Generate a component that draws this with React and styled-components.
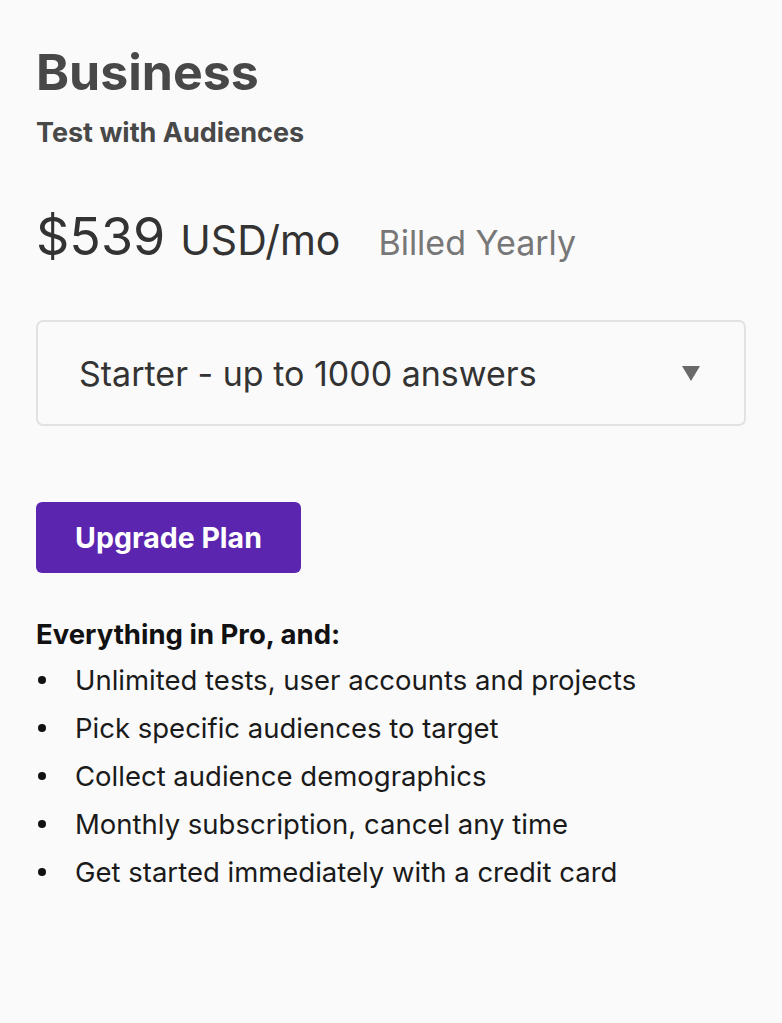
import styled, { createGlobalStyle } from 'styled-components';

const Global = createGlobalStyle`
  html, body {
    margin: 0;
    padding: 0;
    background: #fafafa;
  }
  body {
    font-family: Inter, Lato, "Liberation Sans", sans-serif;
    -webkit-font-smoothing: antialiased;
  }
`;

const Card = styled.div`
  width: 782px;
  min-height: 1023px;
  box-sizing: border-box;
  padding: 40px 36px 0 36px;
  background: #fafafa;
`;

const Title = styled.h1`
  margin: 0;
  font-size: 50px;
  line-height: 64px;
  font-weight: 700;
  color: #484848;
`;

const Subtitle = styled.div`
  margin-top: 13px;
  font-size: 27px;
  line-height: 32px;
  font-weight: 700;
  color: #484848;
`;

const PriceRow = styled.div`
  display: flex;
  align-items: baseline;
  margin-top: 56px;
  color: #333;
`;

const Amount = styled.span`
  font-size: 52px;
  font-weight: 400;
`;

const Unit = styled.span`
  margin-left: 15px;
  font-size: 41px;
`;

const Billing = styled.span`
  margin-left: 38px;
  font-size: 34px;
  color: #777;
`;

const Select = styled.div`
  display: flex;
  align-items: center;
  justify-content: space-between;
  margin-top: 52px;
  height: 106px;
  box-sizing: border-box;
  padding: 0 44px 0 41px;
  border: 2px solid #e2e2e2;
  border-radius: 7px;
  background: #fafafa;
  font-size: 34px;
  color: #333;
`;

const Arrow = styled.span`
  width: 0;
  height: 0;
  border-left: 9px solid transparent;
  border-right: 9px solid transparent;
  border-top: 15px solid #6a6a6a;
`;

const Button = styled.button`
  display: block;
  margin-top: 76px;
  width: 265px;
  height: 71px;
  border: none;
  border-radius: 6px;
  background: #5b25b0;
  color: #fff;
  font-family: inherit;
  font-size: 28.5px;
  font-weight: 700;
  cursor: pointer;
`;

const ListTitle = styled.div`
  margin-top: 45px;
  font-size: 27.5px;
  font-weight: 700;
  color: #111;
  line-height: 32px;
`;

const List = styled.ul`
  margin: 6px 0 0 0;
  padding: 0;
  list-style: none;
`;

const Item = styled.li`
  display: flex;
  align-items: center;
  height: 48px;
  font-size: 27.5px;
  color: #1a1a1a;

  &::before {
    content: '';
    flex: none;
    width: 8px;
    height: 8px;
    border-radius: 50%;
    background: #111;
    margin: 0 29px 0 2px;
  }
`;

const features = [
  'Unlimited tests, user accounts and projects',
  'Pick specific audiences to target',
  'Collect audience demographics',
  'Monthly subscription, cancel any time',
  'Get started immediately with a credit card',
];

export default function App() {
  return (
    <>
      <Global />
      <Card>
        <Title>Business</Title>
        <Subtitle>Test with Audiences</Subtitle>
        <PriceRow>
          <Amount>$539</Amount>
          <Unit>USD/mo</Unit>
          <Billing>Billed Yearly</Billing>
        </PriceRow>
        <Select>
          <span>Starter - up to 1000 answers</span>
          <Arrow />
        </Select>
        <Button>Upgrade Plan</Button>
        <ListTitle>Everything in Pro, and:</ListTitle>
        <List>
          {features.map((f) => (
            <Item key={f}>{f}</Item>
          ))}
        </List>
      </Card>
    </>
  );
}
